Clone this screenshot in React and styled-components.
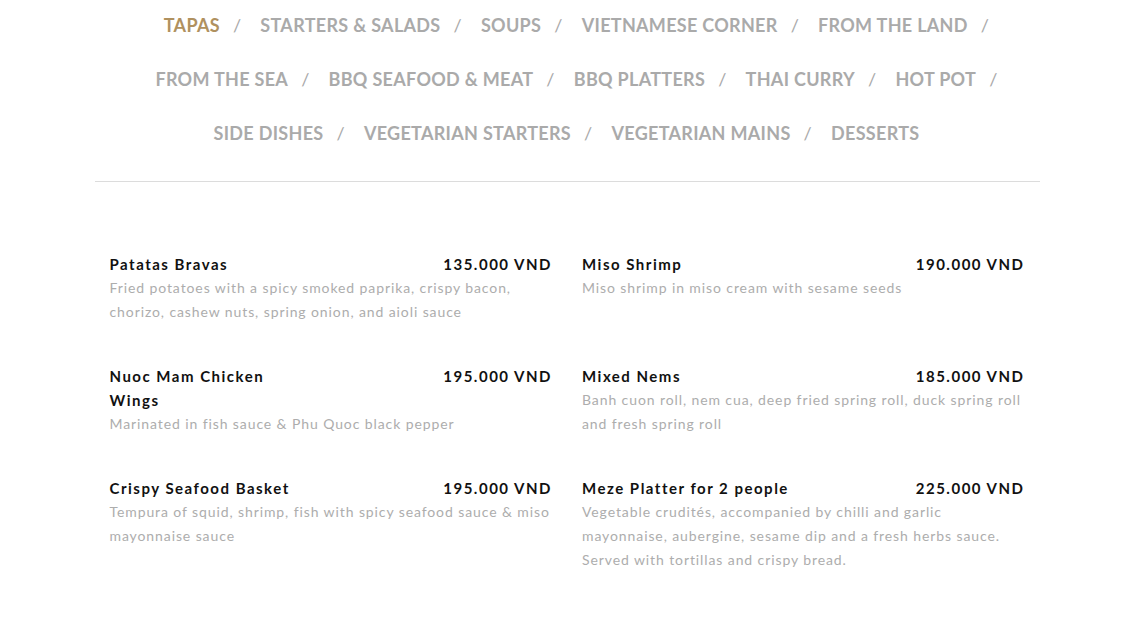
import React from 'react';
import styled, { createGlobalStyle } from 'styled-components';

// Data
const categories = [
  'Tapas',
  'Starters & Salads',
  'Soups',
  'Vietnamese Corner',
  'From the Land',
  'From the Sea',
  'BBQ Seafood & Meat',
  'BBQ Platters',
  'Thai Curry',
  'Hot Pot',
  'Side Dishes',
  'Vegetarian Starters',
  'Vegetarian Mains',
  'Desserts'
];

const dishes = [
  {
    name: 'Patatas Bravas',
    price: '135.000 VND',
    desc: 'Fried potatoes with a spicy smoked paprika, crispy bacon, chorizo, cashew nuts, spring onion, and aioli sauce'
  },
  {
    name: 'Miso Shrimp',
    price: '190.000 VND',
    desc: 'Miso shrimp in miso cream with sesame seeds'
  },
  {
    name: 'Nuoc Mam Chicken Wings',
    price: '195.000 VND',
    desc: 'Marinated in fish sauce & Phu Quoc black pepper'
  },
  {
    name: 'Mixed Nems',
    price: '185.000 VND',
    desc: 'Banh cuon roll, nem cua, deep fried spring roll, duck spring roll and fresh spring roll'
  },
  {
    name: 'Crispy Seafood Basket',
    price: '195.000 VND',
    desc: 'Tempura of squid, shrimp, fish with spicy seafood sauce & miso mayonnaise sauce'
  },
  {
    name: 'Meze Platter for 2 people',
    price: '225.000 VND',
    desc: 'Vegetable crudités, accompanied by chilli and garlic mayonnaise, aubergine, sesame dip and a fresh herbs sauce. Served with tortillas and crispy bread.'
  }
];

// Styles
const GlobalStyle = createGlobalStyle`
  body {
    margin: 0;
    background: #fff;
    font-family: Lato, "Open Sans", sans-serif;
  }
`;

const Wrapper = styled.div`
  width: 945px;
  margin: 0 auto;
`;

const CategoryNav = styled.ul`
  list-style: none;
  margin: 0;
  padding: 0 15px;
  display: flex;
  flex-wrap: wrap;
  justify-content: center;
  row-gap: 4px;
`;

const CategoryItem = styled.li`
  padding: 0 ${(p) => (p.$last ? '20px' : '0')} 0 19px;
  line-height: 50px;
  font-size: 18px;
  font-weight: 700;
  letter-spacing: 0.3px;
  text-transform: uppercase;
  color: ${(p) => (p.$active ? '#b0915f' : '#aaaaaa')};
  white-space: nowrap;
  cursor: pointer;
`;

const Slash = styled.span`
  margin-left: 13px;
  color: #aaaaaa;
  font-weight: 400;
`;

const Divider = styled.hr`
  border: none;
  border-top: 1px solid #dcdcdc;
  margin: 23px 0 0;
`;

const MenuGrid = styled.div`
  display: grid;
  grid-template-columns: 1fr 1fr;
  column-gap: 30px;
  row-gap: 40px;
  padding: 70px 15px 0;
`;

const Dish = styled.div`
  display: flex;
  flex-direction: column;
`;

const DishHead = styled.div`
  display: flex;
  justify-content: space-between;
  align-items: flex-start;
  font-size: 15px;
  line-height: 24px;
  font-weight: 700;
  letter-spacing: 1.5px;
  color: #111;
`;

const DishName = styled.span`
  max-width: 208px;
`;

const DishPrice = styled.span`
  white-space: nowrap;
`;

const DishDesc = styled.p`
  margin: 0;
  font-size: 14px;
  line-height: 24px;
  letter-spacing: 0.9px;
  color: #adadad;
`;

export default function App() {
  return (
    <>
      <GlobalStyle />
      <Wrapper>
        <CategoryNav>
          {categories.map((c, i) => {
            const last = i === categories.length - 1;
            return (
              <CategoryItem key={c} $active={i === 0} $last={last}>
                {c}
                {!last && <Slash>/</Slash>}
              </CategoryItem>
            );
          })}
        </CategoryNav>
        <Divider />
        <MenuGrid>
          {dishes.map((d) => (
            <Dish key={d.name}>
              <DishHead>
                <DishName>{d.name}</DishName>
                <DishPrice>{d.price}</DishPrice>
              </DishHead>
              <DishDesc>{d.desc}</DishDesc>
            </Dish>
          ))}
        </MenuGrid>
      </Wrapper>
    </>
  );
}
